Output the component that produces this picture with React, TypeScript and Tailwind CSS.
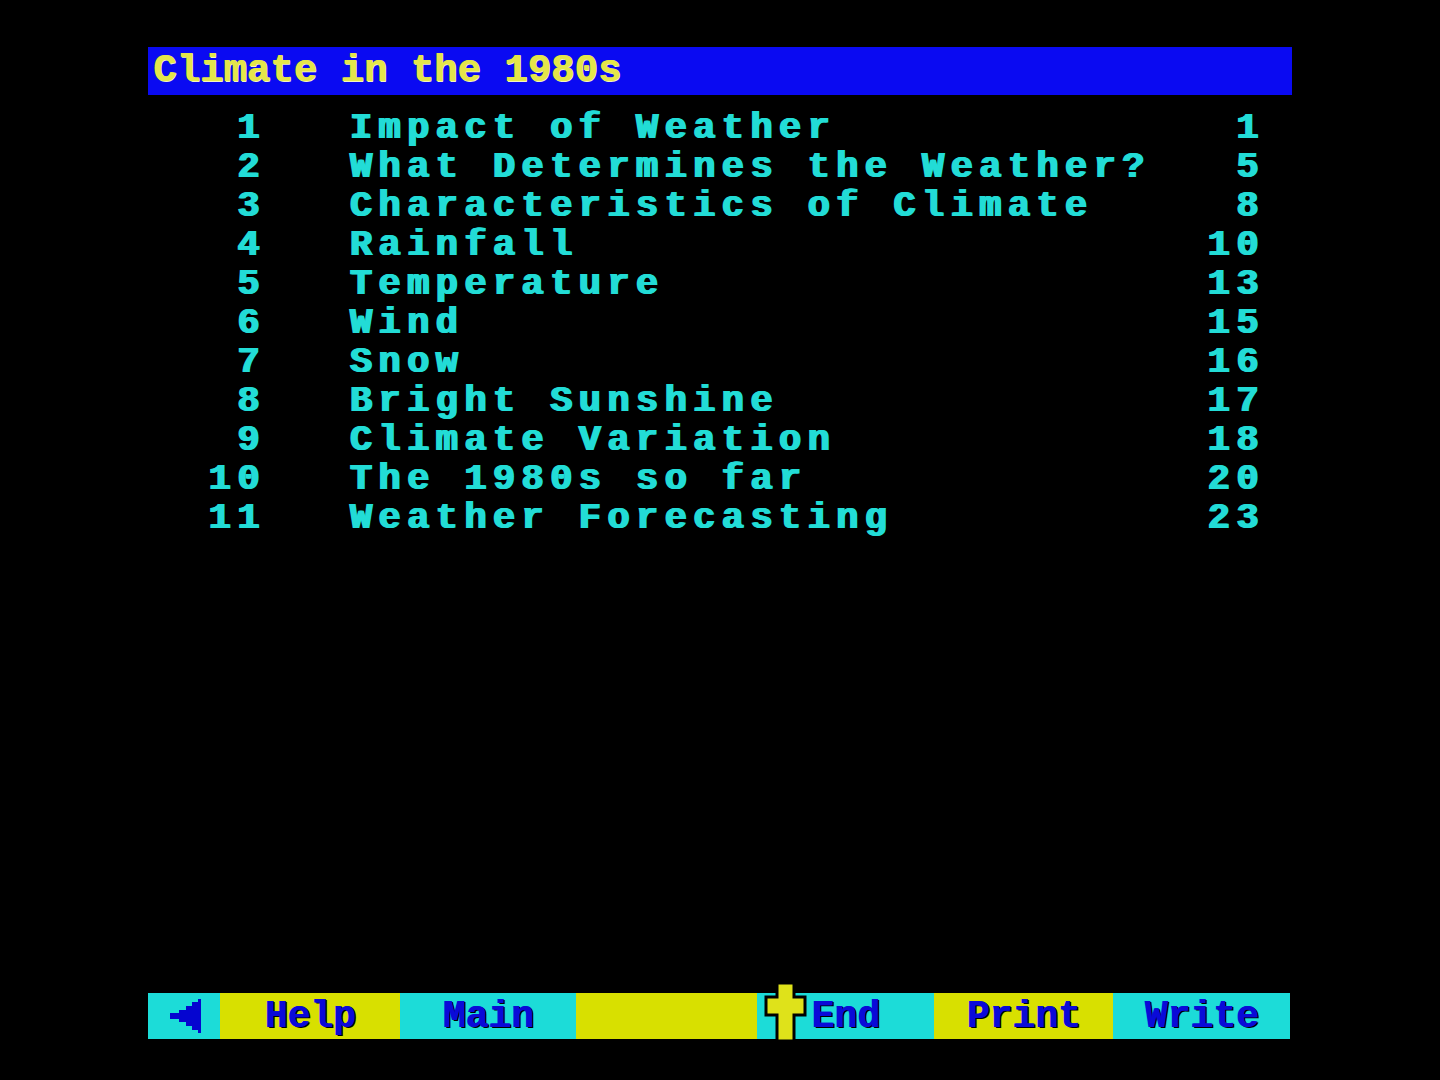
import React from "react";

const rows: [string, string, string][] = [
  ["1", "Impact of Weather", "1"],
  ["2", "What Determines the Weather?", "5"],
  ["3", "Characteristics of Climate", "8"],
  ["4", "Rainfall", "10"],
  ["5", "Temperature", "13"],
  ["6", "Wind", "15"],
  ["7", "Snow", "16"],
  ["8", "Bright Sunshine", "17"],
  ["9", "Climate Variation", "18"],
  ["10", "The 1980s so far", "20"],
  ["11", "Weather Forecasting", "23"],
];

const mono = { fontFamily: '"Liberation Mono", "DejaVu Sans Mono", monospace' };

function Arrow() {
  return (
    <svg width="36" height="34" viewBox="0 0 36 34">
      <path
        d="M33 0 L33 34 L30 34 L30 31 L24 31 L24 27 L18 27 L18 23 L11 23 L11 20 L2 20 L2 14 L11 14 L11 11 L18 11 L18 7 L24 7 L24 3 L30 3 L30 0 Z"
        fill="#0505d0"
      />
    </svg>
  );
}

function Cursor() {
  return (
    <svg width="44" height="62" viewBox="0 0 44 62">
      <path
        d="M13 2 L30 2 L30 16 L41 16 L41 34 L30 34 L30 60 L13 60 L13 34 L2 34 L2 16 L13 16 Z"
        fill="#dfe21a"
        stroke="#000"
        strokeWidth="3"
      />
    </svg>
  );
}

export default function App() {
  const seg = "flex items-center justify-center h-full text-[38px] font-bold text-[#0a0ad8]";
  return (
    <div className="w-[1440px] h-[1080px] bg-black relative overflow-hidden" style={mono}>
      <div className="ml-[148px] w-[1144px] pt-[47px] flex flex-col h-full">
        <div className="h-[48px] bg-[#0a0af2] flex items-center pl-[5px]">
          <span
            className="text-[39px] font-bold text-[#e4e64a] leading-none"
            style={{ textShadow: "1px 0 0 #e4e64a, 1px 1px 0 #f4f4c0" }}
          >
            Climate in the 1980s
          </span>
        </div>
        <div
          className="mt-[14px] flex flex-col text-[#22dcd6] text-[37px] font-bold tracking-[6.4px]"
          style={{ textShadow: "1px 0 0 #22dcd6, 2px 0 0 #22dcd6" }}
        >
          {rows.map(([n, t, p]) => (
            <div key={n} className="grid grid-cols-[117px_1fr_auto] h-[39px] leading-[39px] whitespace-pre">
              <div className="text-right">{n}</div>
              <div className="pl-[84px]">{t}</div>
              <div className="text-right pr-[28px]">{p}</div>
            </div>
          ))}
        </div>
        <div className="flex-1" />
        <div className="mb-[41px] h-[46px] flex" style={{ textShadow: "1px 0 0 #0a0ad8, 2px 1px 0 #000" }}>
          <div className="w-[72px] bg-[#1cdcd8] flex items-center pl-[20px]">
            <Arrow />
          </div>
          <div className={`w-[180px] bg-[#d8e000] ${seg}`}>Help</div>
          <div className={`w-[176px] bg-[#1cdcd8] ${seg}`}>Main</div>
          <div className={`w-[181px] bg-[#d8e000] ${seg}`}></div>
          <div className={`w-[177px] bg-[#1cdcd8] ${seg}`}>End</div>
          <div className={`w-[179px] bg-[#d8e000] ${seg}`}>Print</div>
          <div className={`w-[177px] bg-[#1cdcd8] ${seg}`}>Write</div>
        </div>
      </div>
      <div className="absolute left-[764px] top-[981px]">
        <Cursor />
      </div>
    </div>
  );
}
